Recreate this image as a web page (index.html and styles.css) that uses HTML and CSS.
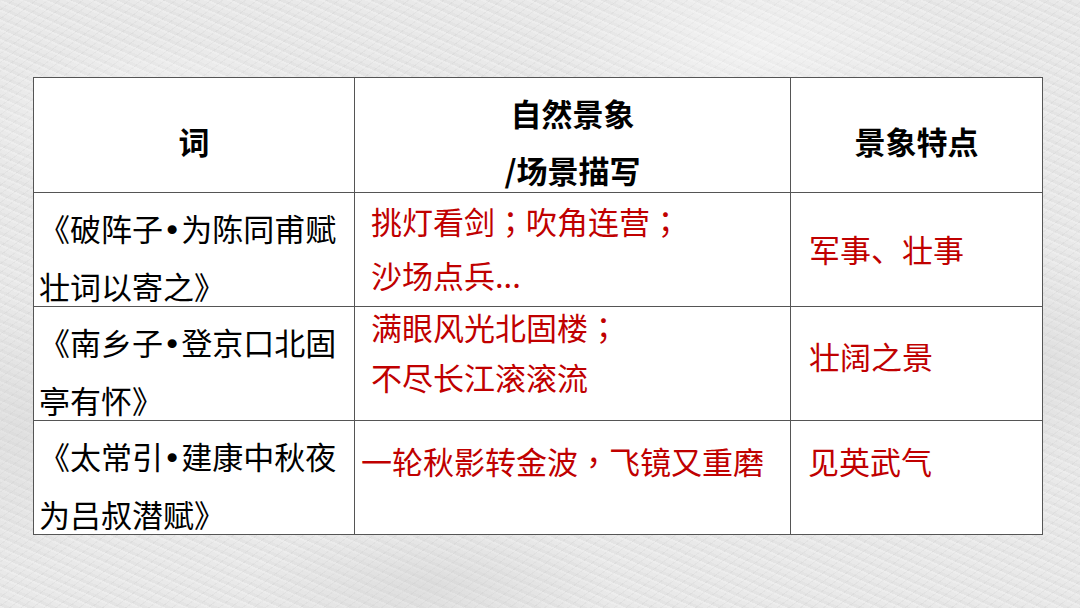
FILE: index.html
```html
<!DOCTYPE html>
<html lang="zh-CN">
<head>
<meta charset="utf-8">
<title>词 · 景象特点</title>
<link rel="stylesheet" href="styles.css">
</head>
<body>
<main class="page">
  <div class="grid">
    <div class="cell head single"><p>词</p></div>
    <div class="cell head double"><p>自然景象<br>/场景描写</p></div>
    <div class="cell head single"><p>景象特点</p></div>

    <div class="cell title"><p>《破阵子<span class="dot">•</span>为陈同甫赋<br>壮词以寄之》</p></div>
    <div class="cell desc r2"><p>挑灯看剑<span class="pc" lang="zh-TW">；</span>吹角连营<span class="pc" lang="zh-TW">；</span><br>沙场点兵...</p></div>
    <div class="cell feat r2"><p>军事、壮事</p></div>

    <div class="cell title"><p>《南乡子<span class="dot">•</span>登京口北固<br>亭有怀》</p></div>
    <div class="cell desc r3"><p>满眼风光北固楼<span class="pc" lang="zh-TW">；</span><br>不尽长江滚滚流</p></div>
    <div class="cell feat r3"><p>壮阔之景</p></div>

    <div class="cell title"><p>《太常引<span class="dot">•</span>建康中秋夜<br>为吕叔潜赋》</p></div>
    <div class="cell desc r4"><p>一轮秋影转金波<span class="pc" lang="zh-TW">，</span>飞镜又重磨</p></div>
    <div class="cell feat r4"><p>见英武气</p></div>
  </div>
</main>
</body>
</html>
```
FILE: styles.css
```css
html, body {
  margin: 0;
  padding: 0;
}
body {
  width: 1080px;
  height: 608px;
  overflow: hidden;
  background-color: #e9e9e9;
  background-image:
    radial-gradient(ellipse 260px 120px at 15% 20%, rgba(255,255,255,0.45), transparent 70%),
    radial-gradient(ellipse 300px 140px at 70% 8%, rgba(255,255,255,0.4), transparent 70%),
    radial-gradient(ellipse 220px 160px at 95% 60%, rgba(205,205,205,0.35), transparent 70%),
    radial-gradient(ellipse 260px 90px at 40% 96%, rgba(200,200,200,0.35), transparent 70%),
    radial-gradient(ellipse 160px 200px at 2% 70%, rgba(205,205,205,0.35), transparent 70%),
    repeating-linear-gradient(23deg, rgba(255,255,255,0.2) 0 2px, rgba(0,0,0,0.025) 2px 5px, transparent 5px 9px),
    repeating-linear-gradient(-37deg, rgba(0,0,0,0.03) 0 1px, transparent 1px 7px);
  font-family: "Noto Sans CJK SC", "Noto Sans", sans-serif;
  font-size: 31px;
  color: #000;
}
.page {
  padding: 77px 0 0 33px;
}
.grid {
  display: grid;
  grid-template-columns: 320px 435px 251px;
  grid-template-rows: 114px 113px 113px 113px;
  gap: 1px;
  width: 1008px;
  background: #555;
  border: 1px solid #555;
}
.cell {
  background: #fff;
  box-sizing: border-box;
  white-space: nowrap;
}
.cell p {
  margin: 0;
}
.dot {
  font-family: "DejaVu Sans", sans-serif;
}
.pc {
  font-family: "Noto Sans CJK TC", "Noto Sans CJK SC", sans-serif;
}
.head {
  font-weight: 700;
  text-align: center;
  line-height: 57px;
}
.head.single { padding-top: 34px; }
.head.double { padding-top: 6px; }

.title {
  line-height: 56px;
  padding: 7px 0 0 5px;
}

.desc, .feat {
  color: #c00000;
  line-height: 54px;
}
.desc.r2 { padding: 1px 0 0 16px; }
.desc.r3 { padding: 0 0 0 16px; line-height: 50px; }
.desc.r3 p { margin-top: -5px; }
.desc.r4 { padding: 13px 0 0 6px; }

.feat.r2 { padding: 29px 0 0 18px; }
.feat.r3 { padding: 22px 0 0 18px; }
.feat.r4 { padding: 13px 0 0 17px; }
```
